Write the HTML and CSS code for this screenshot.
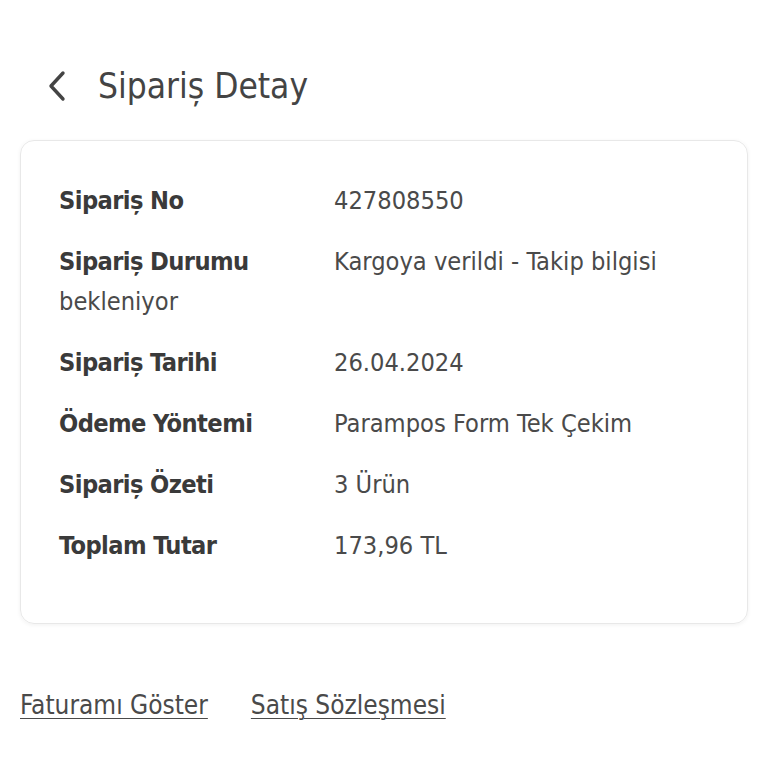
FILE: index.html
```html
<!DOCTYPE html>
<html lang="tr">
<head>
  <meta charset="UTF-8">
  <meta name="viewport" content="width=device-width, initial-scale=1.0">
  <title>Sipariş Detay</title>
  <link rel="stylesheet" href="styles.css">
</head>
<body>
  <div class="page">
    <div class="header">
      <a class="back" href="#">
        <svg width="22" height="32" viewBox="0 0 22 32">
          <path d="M17 3 L5 16 L17 29" fill="none" stroke="#444" stroke-width="3.4" stroke-linecap="round" stroke-linejoin="round"/>
        </svg>
      </a>
      <h1>Sipariș Detay</h1>
    </div>

    <div class="card">
      <p class="row"><span class="label">Sipariș No</span><span class="value">427808550</span></p>
      <p class="row"><span class="label">Sipariș Durumu</span><span class="value">Kargoya verildi - Takip bilgisi</span> <span class="value">bekleniyor</span></p>
      <p class="row"><span class="label">Sipariș Tarihi</span><span class="value">26.04.2024</span></p>
      <p class="row"><span class="label">Ödeme Yöntemi</span><span class="value">Parampos Form Tek Çekim</span></p>
      <p class="row"><span class="label">Sipariș Özeti</span><span class="value">3 Ürün</span></p>
      <p class="row"><span class="label">Toplam Tutar</span><span class="value">173,96 TL</span></p>
    </div>

    <div class="links">
      <a href="#">Faturamı Göster</a>
      <a href="#">Satış Sözleşmesi</a>
    </div>
  </div>
</body>
</html>
```

FILE: styles.css
```css
/* General Styles */
body {
  font-family: "Liberation Sans Narrow", "DejaVu Sans Condensed", "Liberation Sans", sans-serif;
  background-color: #fff;
  color: #4a4a4a;
  margin: 0;
  padding: 0;
}

.page {
  padding: 0 20px;
}

/* Header */
.header {
  display: flex;
  align-items: center;
  height: 108px;
  padding-top: 32px;
}

.back {
  display: flex;
  align-items: center;
  margin-left: 26px;
  width: 52px;
}

h1 {
  font-size: 35px;
  font-weight: normal;
  color: #444;
  margin: 0;
}

/* Card */
.card {
  border: 1px solid #e8e8e8;
  border-radius: 14px;
  box-shadow: 0 1px 4px rgba(0, 0, 0, 0.06);
  padding: 40px 38px 36px;
}

.row {
  font-size: 25.2px;
  line-height: 40px;
  margin: 0 0 21px;
}

.label {
  display: inline-block;
  width: 275px;
  font-weight: bold;
  letter-spacing: -0.6px;
  color: #3a3a3a;
}

/* Links */
.links {
  display: flex;
  gap: 43px;
  margin-top: 66px;
}

.links a {
  font-size: 26px;
  color: #4a4a4a;
  text-decoration: underline;
  text-underline-offset: 4px;
  text-decoration-thickness: 1px;
}
```
